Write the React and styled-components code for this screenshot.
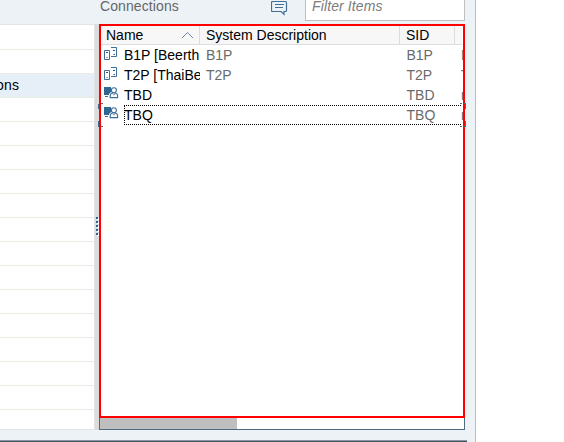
import React from "react";
import styled, { createGlobalStyle } from "styled-components";

const GlobalStyle = createGlobalStyle`
  * { box-sizing: border-box; }
  body {
    margin: 0;
    background: #fff;
    overflow: hidden;
    font: 14px/20px "Liberation Sans", Arial, sans-serif;
    color: #000;
  }
`;

const Window = styled.div`
  width: 476px;
  height: 442px;
  display: flex;
  flex-direction: column;
  background: #edf2f7;
  border-right: 1px solid #bbbdbf;
  overflow: hidden;
`;

const Toolbar = styled.header`
  height: 24px;
  flex: none;
  display: flex;
  align-items: flex-start;
  padding-left: 100px;
`;

const Title = styled.div`
  width: 171px;
  color: #666;
  margin-top: -4px;
  letter-spacing: 0.1px;
`;

const MessageIcon = styled.svg`
  width: 17px;
  height: 16px;
  flex: none;
`;

const Filter = styled.div`
  width: 160px;
  height: 26px;
  margin: -5px 0 0 17px;
  padding: 0 6px;
  background: #fff;
  border: 1px solid #bfbfbf;
  color: #7c7c7c;
  font-style: italic;
  line-height: 20px;
  letter-spacing: 0.12px;
`;

const Content = styled.main`
  display: flex;
  height: 406px;
  flex: none;
`;

const Tree = styled.div`
  width: 95px;
  background: #fff;
  border: solid #e1e3e4;
  border-width: 1px 1px 1px 0;
  overflow: hidden;
`;

const TreeRow = styled.div`
  height: ${(p) => (p.$first ? 25 : 24)}px;
  border-bottom: 1px solid #ebebe4;
  background: ${(p) => (p.$selected ? "#e6eef7" : "#fff")};
  line-height: 23px;
`;

const TreeLabel = styled.span`
  margin-left: -4px;
  letter-spacing: 0.2px;
`;

const Splitter = styled.div`
  width: 4px;
  background: #dcdcdc;
  display: flex;
  flex-direction: column;
  align-items: flex-end;
  gap: 2px;
  padding: 193px 1px 0 0;
`;

const Grip = styled.i`
  width: 2px;
  height: 2px;
  background: #2a6496;
  box-shadow: 1px 1px #fff;
`;

const Panel = styled.section`
  position: relative;
  width: 366px;
  display: flex;
  flex-direction: column;
`;

const Table = styled.div`
  height: 394px;
  border: 2px solid #f00;
  background: #fff;
  overflow: hidden;
`;

const HeaderRow = styled.div`
  display: grid;
  grid-template-columns: 99px 200px 55px 7px;
  width: 361px;
  height: 19px;
  background: #f7f7f7;
  border-bottom: 1px solid #dedede;
`;

const HeaderCell = styled.div`
  display: flex;
  align-items: center;
  justify-content: space-between;
  border-right: 1px solid #dcdcdc;
  padding: 0 5px 0 ${(p) => (p.$first ? 5 : 6)}px;
  line-height: 18px;
  white-space: nowrap;
`;

const Row = styled.div`
  display: grid;
  grid-template-columns: 23px 76px 200px 55px 8px;
  height: 20px;
  line-height: 20px;
`;

const IconCell = styled.div`
  padding: 2px 0 0 3px;
  line-height: 0;
`;

const Cell = styled.div`
  overflow: hidden;
  white-space: nowrap;
  color: ${(p) => (p.$primary ? "#000" : "#6a6a6a")};
  padding-left: ${(p) => (p.$primary ? 0 : 6)}px;
`;

const SidCell = styled(Cell)`
  padding-left: 6.5px;
`;

const Scrollbar = styled.div`
  height: 12px;
  background: #fff;
  border: solid #506b7e;
  border-width: 0 1px 1px 1px;
`;

const Thumb = styled.div`
  width: 137px;
  height: 100%;
  background: #bfbfbf;
`;

const FocusMark = styled.svg`
  position: absolute;
  left: -1px;
  top: 79px;
  width: 368px;
  height: 24px;
`;

const BottomBar = styled.div`
  width: 467px;
  height: 2px;
  margin-top: 10px;
  background: #46545f;
  border-top: 1px solid #8996a1;
  flex: none;
`;

function ServerIcon() {
  return (
    <svg width="15" height="14" viewBox="0 0 15 14" fill="none" stroke="#3c6e98">
      <path d="M.5 3.5h5v9h-5zM7 .5h5.5v9H7" />
      <path d="M2 5.5h2M2.5 10.5h1M9 3.5h2M9.5 7.5h1.5" stroke="#245b88" />
    </svg>
  );
}

function UserIcon() {
  return (
    <svg width="15" height="14" viewBox="0 0 15 14" fill="none" stroke="#3c6e98">
      <path d="M0 0h7v5L5 7v1H0z" fill="#2f6692" stroke="none" />
      <path d="M1 9.5h3" />
      <circle cx="9.9" cy="3.2" r="2.5" fill="#fff" strokeWidth="1.1" />
      <path d="M6.2 10.6V9q0-2.4 2.3-3h2.8q2.3.6 2.3 3v1.6z" fill="#fff" strokeWidth="1.1" />
      <path d="m8.5 7 1.4 1L11.4 7" strokeWidth=".7" />
    </svg>
  );
}

const connections = [
  { name: "B1P [Beerth", description: "B1P", sid: "B1P", group: "M", Icon: ServerIcon },
  { name: "T2P [ThaiBe", description: "T2P", sid: "T2P", group: "T", Icon: ServerIcon },
  { name: "TBD", sid: "TBD", group: "n", Icon: UserIcon },
  { name: "TBQ", sid: "TBQ", group: "n", Icon: UserIcon },
];

export default function App() {
  return (
    <>
      <GlobalStyle />
      <Window>
        <Toolbar>
          <Title>Connections</Title>
          <MessageIcon viewBox="0 0 17 16" fill="none" stroke="#426f96" strokeWidth="1.2">
            <path d="M1.5 1.5h13q1 0 1 1v8q0 1-1 1h-1.5v2.8l-2.8-2.8H1.5q-1 0-1-1v-8q0-1 1-1z" />
            <path d="M4 4.5h9M4 7.5h8" />
          </MessageIcon>
          <Filter>Filter Items</Filter>
        </Toolbar>
        <Content>
          <Tree>
            {Array.from({ length: 17 }, (_, i) => (
              <TreeRow key={i} $first={i === 0} $selected={i === 2}>
                {i === 2 && <TreeLabel>ons</TreeLabel>}
              </TreeRow>
            ))}
          </Tree>
          <Splitter>
            {[0, 1, 2, 3, 4].map((i) => <Grip key={i} />)}
          </Splitter>
          <Panel>
            <Table>
              <HeaderRow>
                <HeaderCell $first>
                  Name
                  <svg width="13" height="8" viewBox="0 0 13 8" fill="none" stroke="#7186a0">
                    <path d="m1 7 5.5-5.5L12 7" />
                  </svg>
                </HeaderCell>
                <HeaderCell>System Description</HeaderCell>
                <HeaderCell>SID</HeaderCell>
                <HeaderCell />
              </HeaderRow>
              {connections.map(({ name, description, sid, group, Icon }) => (
                <Row key={name}>
                  <IconCell><Icon /></IconCell>
                  <Cell $primary>{name}</Cell>
                  <Cell>{description}</Cell>
                  <SidCell>{sid}</SidCell>
                  <Cell>{group}</Cell>
                </Row>
              ))}
            </Table>
            <Scrollbar><Thumb /></Scrollbar>
            <FocusMark viewBox="0 0 368 24" fill="none" shapeRendering="crispEdges">
              <path d="M26 2.5h338M26 21.5h338M26.5 3v19" stroke="#000" strokeDasharray="1 1" />
              <path d="M.5 6V.5M3 .5h2M.5 18v5.5M3 23.5h2M362 .5h2M366 .5h1.5V6M362 23.5h2M366 23.5h1.5V18" stroke="#426f96" />
            </FocusMark>
          </Panel>
        </Content>
        <BottomBar />
      </Window>
    </>
  );
}
